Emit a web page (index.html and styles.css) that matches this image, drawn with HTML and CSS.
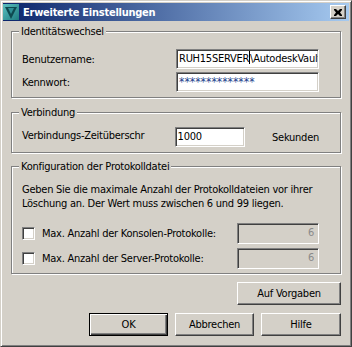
FILE: index.html
```html
<!DOCTYPE html>
<html lang="de">
<head>
    <meta charset="UTF-8">
    <title>Erweiterte Einstellungen</title>
    <link rel="stylesheet" href="styles.css">
</head>
<body>
    <div class="window">
        <div class="titlebar">
            <svg class="app-icon" width="16" height="16" viewBox="0 0 16 16">
                <defs>
                    <linearGradient id="tealGrad" x1="0" y1="0" x2="1" y2="1">
                        <stop offset="0" stop-color="#5cc0c0"/>
                        <stop offset="1" stop-color="#1e7c80"/>
                    </linearGradient>
                </defs>
                <rect x="0" y="0" width="16" height="16" fill="url(#tealGrad)"/>
                <polygon points="2,3 14,3 8,15" fill="#0e4a50"/>
                <polygon points="5,4 11,4 8,10" fill="#2f8f95"/>
            </svg>
            <span class="title">Erweiterte Einstellungen</span>
            <div class="close-btn">
                <svg width="8" height="7" viewBox="0 0 8 7">
                    <path d="M0 0h2l2 2 2-2h2v1l-2 2.5 2 2.5v1h-2l-2-2-2 2h-2v-1l2-2.5-2-2.5z" fill="#000"/>
                </svg>
            </div>
        </div>

        <div class="dialog">
            <!-- Identitätswechsel -->
            <fieldset class="group group-identity">
                <legend>Identitätswechsel</legend>
                <div class="row">
                    <span class="label">Benutzername:</span>
                    <div class="edit edit-wide">RUH15SERVER<span class="caret"></span>\AutodeskVault</div>
                </div>
                <div class="row">
                    <span class="label">Kennwort:</span>
                    <div class="edit edit-wide edit-password">**************</div>
                </div>
            </fieldset>

            <!-- Verbindung -->
            <fieldset class="group group-connection">
                <legend>Verbindung</legend>
                <div class="row">
                    <span class="label label-raised">Verbindungs-Zeitüberschr</span>
                    <div class="edit edit-short">1000</div>
                    <span class="unit">Sekunden</span>
                </div>
            </fieldset>

            <!-- Protokolldatei -->
            <fieldset class="group group-log">
                <legend>Konfiguration der Protokolldatei</legend>
                <p class="hint">Geben Sie die maximale Anzahl der Protokolldateien vor ihrer<br>Löschung an. Der Wert muss zwischen 6 und 99 liegen.</p>
                <div class="row check-row">
                    <span class="checkbox"></span>
                    <span class="check-label">Max. Anzahl der Konsolen-Protokolle:</span>
                    <div class="edit edit-num disabled">6</div>
                </div>
                <div class="row check-row">
                    <span class="checkbox"></span>
                    <span class="check-label">Max. Anzahl der Server-Protokolle:</span>
                    <div class="edit edit-num disabled">6</div>
                </div>
            </fieldset>

            <div class="defaults-row">
                <button class="btn btn-defaults">Auf Vorgaben</button>
            </div>
            <div class="actions">
                <button class="btn btn-default">OK</button>
                <button class="btn">Abbrechen</button>
                <button class="btn btn-help">Hilfe</button>
            </div>
        </div>
    </div>
</body>
</html>
```

FILE: styles.css
```css
* {
    box-sizing: border-box;
}
body {
    margin: 0;
    font-family: "DejaVu Sans", sans-serif;
    font-stretch: condensed;
    font-size: 11px;
    letter-spacing: -0.25px;
    color: #000;
    background-color: #d4d0c8;
}
.window {
    width: 352px;
    height: 347px;
    background-color: #d4d0c8;
    border: 1px solid;
    border-color: #d4d0c8 #404040 #404040 #d4d0c8;
    box-shadow: inset 1px 1px #fff, inset -1px -1px #808080;
    padding: 2px;
    display: flex;
    flex-direction: column;
}
.titlebar {
    height: 18px;
    display: flex;
    align-items: center;
    background: linear-gradient(to right, #0a246a, #a6caf0);
}
.app-icon {
    display: block;
}
.title {
    margin-left: 4px;
    color: #fff;
    font-weight: bold;
    line-height: 13px;
}
.close-btn {
    margin-left: auto;
    margin-right: 3px;
    width: 16px;
    height: 14px;
    display: flex;
    align-items: center;
    justify-content: center;
    background-color: #d4d0c8;
    border: 1px solid;
    border-color: #fff #404040 #404040 #fff;
    box-shadow: inset -1px -1px #808080;
}
.close-btn svg {
    display: block;
}
.dialog {
    flex: 1;
    padding: 4px 8px 0 8px;
    display: flex;
    flex-direction: column;
}
.group {
    margin: 0;
    min-width: 0;
    padding: 0 21px 4px 10px;
    border: 1px solid #808080;
    box-shadow: inset 1px 1px #fff, 1px 1px #fff;
    width: 330px;
}
.group legend {
    margin-left: -3px;
    padding: 0 2px;
    line-height: 13px;
    background-color: #d4d0c8;
}
.group-identity {
    padding-top: 11px;
    padding-bottom: 5px;
    margin-bottom: 8px;
}
.group-connection {
    padding-top: 8px;
    padding-bottom: 5px;
    margin-bottom: 7px;
}
.group-log {
    padding-top: 10px;
    padding-bottom: 4px;
    margin-bottom: 8px;
}
.row {
    display: flex;
    align-items: center;
}
.group-identity .row + .row {
    margin-top: 3px;
}
.label {
    width: 154px;
    line-height: 13px;
}
.label-raised {
    margin-bottom: 4px;
}
.edit {
    height: 20px;
    background-color: #fff;
    border: 1px solid;
    border-color: #808080 #fff #fff #808080;
    box-shadow: inset 1px 1px #404040, inset -1px -1px #d4d0c8;
    padding: 0 2px;
    line-height: 18px;
    white-space: nowrap;
    overflow: hidden;
}
.edit-wide {
    width: 143px;
}
.edit-password {
    color: #1c3f8c;
    font-size: 12px;
    letter-spacing: 0;
}
.caret {
    display: inline-block;
    width: 1px;
    height: 13px;
    background-color: #000;
    vertical-align: -2px;
}
.edit-short {
    width: 71px;
}
.unit {
    margin-left: 27px;
}
.hint {
    margin: 0 0 12px 0;
    line-height: 14px;
    white-space: nowrap;
}
.check-row + .check-row {
    margin-top: 4px;
}
.checkbox {
    width: 13px;
    height: 13px;
    background-color: #fff;
    border: 1px solid;
    border-color: #808080 #fff #fff #808080;
    box-shadow: inset 1px 1px #404040, inset -1px -1px #d4d0c8;
}
.check-label {
    margin-left: 7px;
    flex: 1;
}
.edit-num {
    width: 82px;
    height: 21px;
    text-align: right;
    padding-right: 4px;
}
.edit.disabled {
    background-color: #d4d0c8;
    color: #8a8a8a;
}
.defaults-row {
    display: flex;
    justify-content: flex-end;
}
.actions {
    display: flex;
    justify-content: flex-end;
    gap: 7px;
    margin-top: 8px;
}
.btn {
    height: 23px;
    width: 79px;
    padding: 0;
    font-family: inherit;
    font-stretch: inherit;
    font-size: 11px;
    letter-spacing: inherit;
    color: #000;
    background-color: #d4d0c8;
    border: 1px solid;
    border-color: #fff #404040 #404040 #fff;
    box-shadow: inset -1px -1px #808080;
    border-radius: 0;
}
.btn-defaults {
    width: 104px;
}
.btn-help {
    width: 80px;
}
.btn-default {
    border-color: #000;
    box-shadow: inset 1px 1px #fff, inset -1px -1px #404040, inset -2px -2px #808080;
}
```
